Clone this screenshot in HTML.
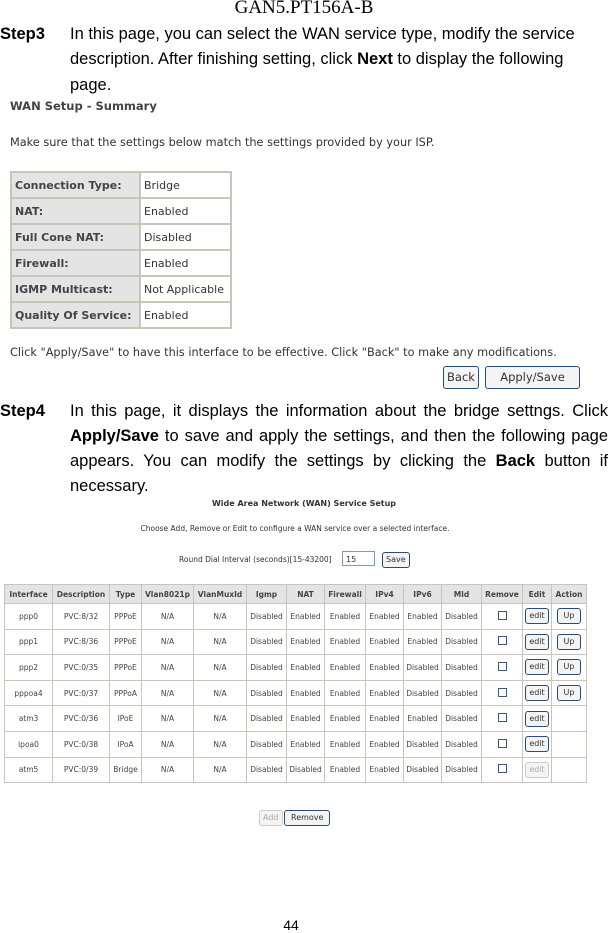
<!DOCTYPE html>
<html><head><meta charset="utf-8"><style>
body{margin:0;width:608px;height:931px;position:relative;background:#fff;font-family:"Liberation Sans",sans-serif;overflow:hidden}
.a{position:absolute;white-space:nowrap}
.t{font-size:16.5px;color:#000;line-height:25px}
.v{font-family:"DejaVu Sans",sans-serif;color:#333}
table{border-collapse:collapse;position:absolute;table-layout:fixed}
.s td{border:2px solid #c9c5b8;font-family:"DejaVu Sans",sans-serif;font-size:11px;color:#333;height:24px;padding:0 3px;white-space:nowrap;overflow:hidden}
.s td.l{background:#e4e4e4;font-weight:bold;color:#444}
.w td{border:1px solid #c9c5b8;font-family:"DejaVu Sans",sans-serif;font-size:7.5px;color:#444;text-align:center;height:24.6px;padding:0;white-space:nowrap;overflow:hidden}
.w tr.h td{background:#e4e4e4;font-weight:bold;height:18px}
.btn{display:inline-block;border:1px solid #2a4d74;border-radius:3px;background:#f4f4f4;font-size:8px;padding:2px 3px;line-height:10px;color:#333}
.cb{display:inline-block;width:7px;height:7px;border:1px solid #3a5a80;background:#fff}
.j{width:538px;white-space:normal;text-align:justify;text-align-last:justify}
</style></head><body>
<div class="a" style="left:0;width:608px;top:-3px;text-align:center;font-family:'Liberation Serif',serif;font-size:19px">GAN5.PT156A-B</div>
<div class="a t" style="left:0;top:22px;font-weight:bold">Step3</div>
<div class="a t" style="left:70px;top:22px">In this page, you can select the WAN service type, modify the service</div>
<div class="a t" style="left:70px;top:47px">description. After finishing setting, click <b>Next</b> to display the following</div>
<div class="a t" style="left:70px;top:73px">page.</div>
<div class="a v" style="left:10px;top:99px;font-size:11.5px;font-weight:bold;color:#444">WAN Setup - Summary</div>
<div class="a v" style="left:10px;top:136px;font-size:11.3px">Make sure that the settings below match the settings provided by your ISP.</div>
<table class="s" style="left:10px;top:171px;width:222px">
<tr><td class="l" style="width:121px">Connection Type:</td><td>Bridge</td></tr>
<tr><td class="l">NAT:</td><td>Enabled</td></tr>
<tr><td class="l">Full Cone NAT:</td><td>Disabled</td></tr>
<tr><td class="l">Firewall:</td><td>Enabled</td></tr>
<tr><td class="l">IGMP Multicast:</td><td>Not Applicable</td></tr>
<tr><td class="l">Quality Of Service:</td><td>Enabled</td></tr>
</table>
<div class="a v" style="left:10px;top:346px;font-size:11.3px">Click "Apply/Save" to have this interface to be effective. Click "Back" to make any modifications.</div>
<div class="a v" style="left:443px;top:366px;width:34px;height:21px;border:1px solid #2a4d74;border-radius:3px;background:#f4f4f4;font-size:11.5px;text-align:center;line-height:21px">Back</div>
<div class="a v" style="left:485px;top:366px;width:93px;height:21px;border:1px solid #2a4d74;border-radius:3px;background:#f4f4f4;font-size:11.5px;text-align:center;line-height:21px">Apply/Save</div>
<div class="a t" style="left:0;top:399px;font-weight:bold">Step4</div>
<div class="a t j" style="left:70px;top:399px">In this page, it displays the information about the bridge settngs. Click</div>
<div class="a t j" style="left:70px;top:424px"><b>Apply/Save</b> to save and apply the settings, and then the following page</div>
<div class="a t j" style="left:70px;top:449px">appears. You can modify the settings by clicking the <b>Back</b> button if</div>
<div class="a t" style="left:70px;top:474px">necessary.</div>
<div class="a v" style="left:0;width:608px;text-align:center;top:499px;font-size:8px;font-weight:bold;color:#333">Wide Area Network (WAN) Service Setup</div>
<div class="a v" style="left:0;width:590px;text-align:center;top:524px;font-size:7.5px">Choose Add, Remove or Edit to configure a WAN service over a selected interface.</div>
<div class="a v" style="left:179px;top:555px;font-size:7.5px">Round Dial Interval (seconds)[15-43200]</div>
<div class="a v" style="left:342px;top:551px;width:33px;height:15px;border:1px solid #7a9ab8;font-size:8px;line-height:15px;padding-left:3px;box-sizing:border-box">15</div>
<div class="a v btn" style="left:382px;top:552px">Save</div>
<table class="w" style="left:4px;top:584px;width:583px">
<tr class="h"><td style="width:47px">Interface</td><td style="width:56px">Description</td><td style="width:31px">Type</td><td style="width:51px">Vlan8021p</td><td style="width:52px">VlanMuxId</td><td style="width:39px">Igmp</td><td style="width:37px">NAT</td><td style="width:40px">Firewall</td><td style="width:37px">IPv4</td><td style="width:37px">IPv6</td><td style="width:39px">Mld</td><td style="width:40px">Remove</td><td style="width:28px">Edit</td><td>Action</td></tr>
<tr><td>ppp0</td><td>PVC:8/32</td><td>PPPoE</td><td>N/A</td><td>N/A</td><td>Disabled</td><td>Enabled</td><td>Enabled</td><td>Enabled</td><td>Enabled</td><td>Disabled</td><td><span class="cb"></span></td><td><span class="btn">edit</span></td><td><span class="btn" style="padding:2px 6px">Up</span></td></tr>
<tr><td>ppp1</td><td>PVC:8/36</td><td>PPPoE</td><td>N/A</td><td>N/A</td><td>Disabled</td><td>Enabled</td><td>Enabled</td><td>Enabled</td><td>Enabled</td><td>Disabled</td><td><span class="cb"></span></td><td><span class="btn">edit</span></td><td><span class="btn" style="padding:2px 6px">Up</span></td></tr>
<tr><td>ppp2</td><td>PVC:0/35</td><td>PPPoE</td><td>N/A</td><td>N/A</td><td>Disabled</td><td>Enabled</td><td>Enabled</td><td>Enabled</td><td>Disabled</td><td>Disabled</td><td><span class="cb"></span></td><td><span class="btn">edit</span></td><td><span class="btn" style="padding:2px 6px">Up</span></td></tr>
<tr><td>pppoa4</td><td>PVC:0/37</td><td>PPPoA</td><td>N/A</td><td>N/A</td><td>Disabled</td><td>Enabled</td><td>Enabled</td><td>Enabled</td><td>Disabled</td><td>Disabled</td><td><span class="cb"></span></td><td><span class="btn">edit</span></td><td><span class="btn" style="padding:2px 6px">Up</span></td></tr>
<tr><td>atm3</td><td>PVC:0/36</td><td>IPoE</td><td>N/A</td><td>N/A</td><td>Disabled</td><td>Enabled</td><td>Enabled</td><td>Enabled</td><td>Enabled</td><td>Disabled</td><td><span class="cb"></span></td><td><span class="btn">edit</span></td><td></td></tr>
<tr><td>ipoa0</td><td>PVC:0/38</td><td>IPoA</td><td>N/A</td><td>N/A</td><td>Disabled</td><td>Enabled</td><td>Enabled</td><td>Enabled</td><td>Disabled</td><td>Disabled</td><td><span class="cb"></span></td><td><span class="btn">edit</span></td><td></td></tr>
<tr><td>atm5</td><td>PVC:0/39</td><td>Bridge</td><td>N/A</td><td>N/A</td><td>Disabled</td><td>Disabled</td><td>Enabled</td><td>Enabled</td><td>Disabled</td><td>Disabled</td><td><span class="cb"></span></td><td><span class="btn" style="border-color:#ccc;color:#aaa">edit</span></td><td></td></tr>
</table>
<div class="a v btn" style="left:259px;top:810px;border-color:#ccc;color:#aaa">Add</div>
<div class="a v btn" style="left:284px;top:810px;padding:2px 6px">Remove</div>
<div class="a" style="left:0;width:582px;text-align:center;top:917px;font-size:14px">44</div>
</body></html>
